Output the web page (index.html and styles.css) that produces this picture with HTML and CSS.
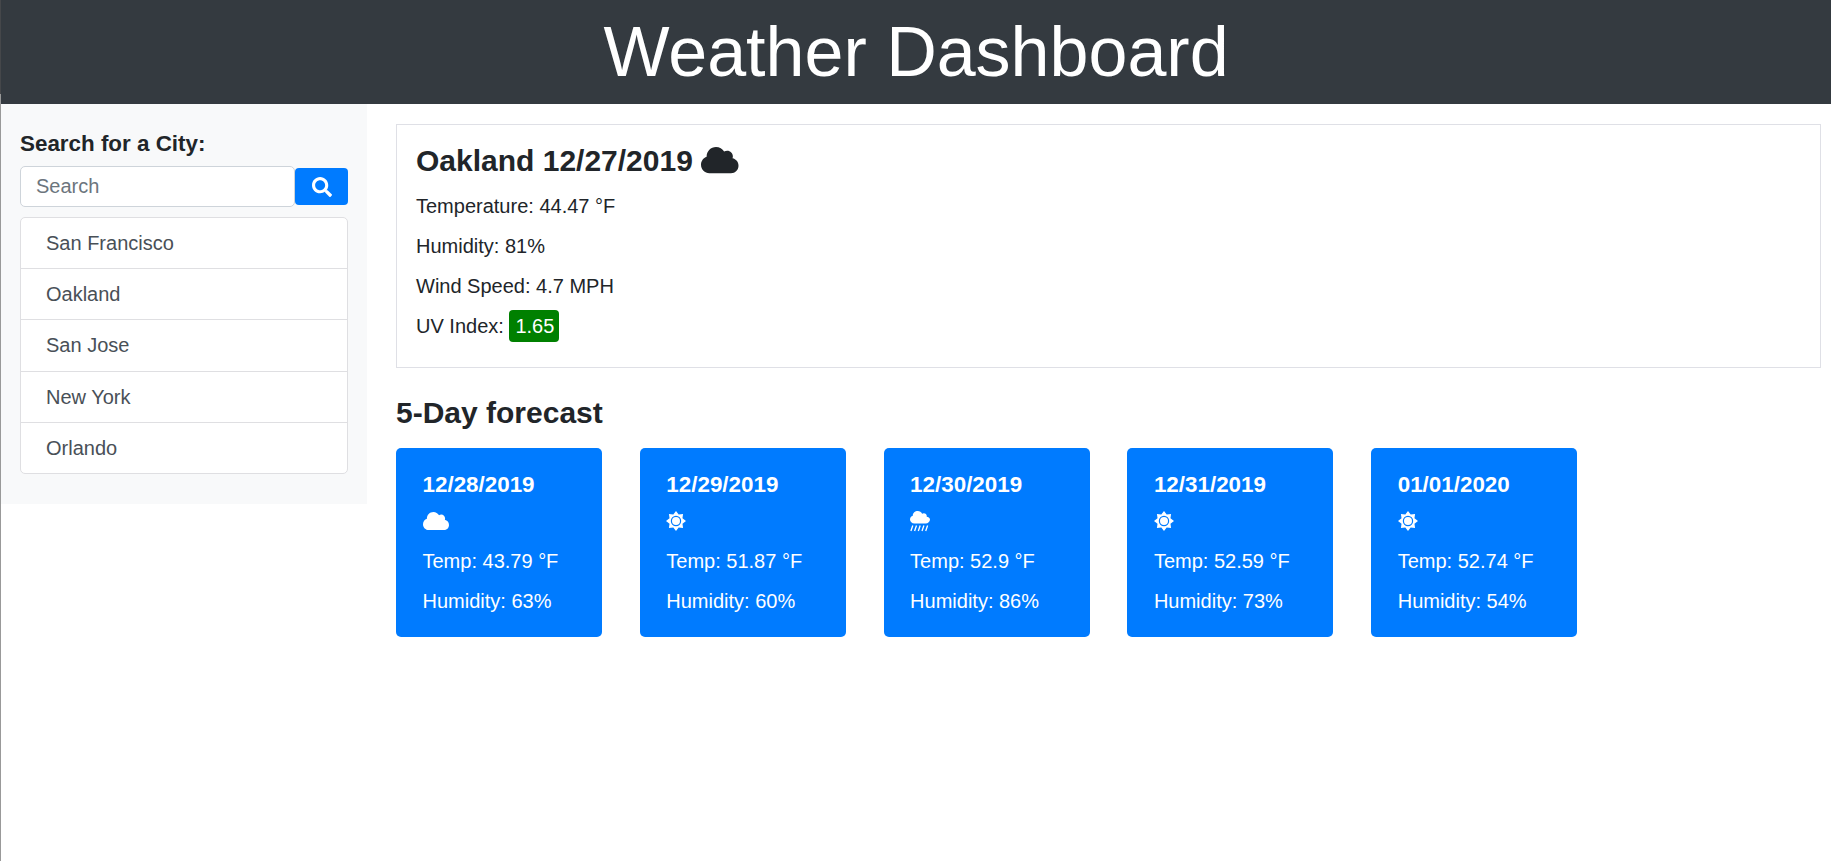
FILE: index.html
```html
<!DOCTYPE html>
<html lang="en">
<head>
    <meta charset="UTF-8">
    <meta name="viewport" content="width=device-width, initial-scale=1.0">
    <title>Weather Dashboard</title>
    <link rel="stylesheet" href="styles.css">
</head>
<body>
    <svg class="icon-defs" aria-hidden="true">
        <symbol id="icon-cloud" viewBox="0 0 640 512" preserveAspectRatio="xMinYMid">
            <path d="M537.6 226.6c4.1-10.7 6.4-22.4 6.4-34.6 0-53-43-96-96-96-19.7 0-38.1 6-53.3 16.2C367 64.2 315.3 32 256 32c-88.4 0-160 71.6-160 160 0 2.7.1 5.4.2 8.1C40.2 219.8 0 273.2 0 336c0 79.5 64.5 144 144 144h368c70.7 0 128-57.3 128-128 0-61.9-44-113.6-102.4-125.4z"/>
        </symbol>
        <symbol id="icon-sun" viewBox="0 -1 22 22" preserveAspectRatio="xMinYMid">
            <path fill-rule="evenodd" d="M10 0l2.680 3.530 4.390-.600-.600 4.390L20 10l-3.530 2.680.600 4.390-4.390-.600L10 20l-2.680-3.530-4.390.600.600-4.390L0 10l3.530-2.680-.600-4.390 4.390.600zM10 4.800a5.200 5.200 0 1 0 0 10.400 5.200 5.200 0 0 0 0-10.400zM10 6a4 4 0 1 1 0 8 4 4 0 0 1 0-8z"/>
        </symbol>
        <symbol id="icon-rain" viewBox="0 -1 22 22" preserveAspectRatio="xMinYMid">
            <path d="M16.600 5.800c.1-.3.200-.6.200-.9 0-1.500-1.300-2.700-3-2.700-.6 0-1.200.2-1.700.5C11.300.9 9.700 0 7.800 0 5 0 2.800 2 2.800 4.500v.3C1.200 5.300 0 6.700 0 8.400 0 10.600 2 12.400 4.400 12.400h11.200c2.400 0 4.400-1.800 4.400-4 0-1.300-1.400-2.400-3.400-2.600z"/>
            <path class="rain-lines" d="M2.800 14.500L.9 20M6.500 14.500L4.600 20M10.200 14.500L8.300 20M13.900 14.500L12 20M17.600 14.500L15.700 20"/>
        </symbol>
    </svg>

    <header class="top-bar">
        <h1>Weather Dashboard</h1>
    </header>

    <div class="page">
        <aside class="sidebar">
            <h2 class="search-title">Search for a City:</h2>
            <div class="search-row">
                <input class="search-input" type="text" placeholder="Search">
                <button class="search-btn" type="button" aria-label="Search">
                    <svg class="search-icon" viewBox="0 0 512 512"><path d="M505 442.7L405.3 343c-4.500-4.500-10.600-7-17-7H372c27.600-35.300 44-79.700 44-128C416 93.100 322.900 0 208 0S0 93.100 0 208s93.100 208 208 208c48.300 0 92.700-16.400 128-44v16.300c0 6.400 2.500 12.500 7 17l99.700 99.700c9.400 9.400 24.600 9.400 33.900 0l28.300-28.300c9.400-9.400 9.400-24.600.1-34zM208 336c-70.700 0-128-57.200-128-128 0-70.700 57.200-128 128-128 70.700 0 128 57.200 128 128 0 70.700-57.200 128-128 128z"/></svg>
                </button>
            </div>
            <ul class="city-list">
                <li>San Francisco</li>
                <li>Oakland</li>
                <li>San Jose</li>
                <li>New York</li>
                <li>Orlando</li>
            </ul>
        </aside>

        <main class="content">
            <section class="current">
                <h2 class="current-title">Oakland 12/27/2019 <svg class="current-icon"><use href="#icon-cloud"/></svg></h2>
                <p>Temperature: 44.47 °F</p>
                <p>Humidity: 81%</p>
                <p>Wind Speed: 4.7 MPH</p>
                <p>UV Index: <span class="uv-badge">1.65</span></p>
            </section>

            <h2 class="forecast-title">5-Day forecast</h2>
            <div class="forecast">
                <div class="day-card">
                    <h3>12/28/2019</h3>
                    <svg class="day-icon"><use href="#icon-cloud"/></svg>
                    <p>Temp: 43.79 °F</p>
                    <p>Humidity: 63%</p>
                </div>
                <div class="day-card">
                    <h3>12/29/2019</h3>
                    <svg class="day-icon"><use href="#icon-sun"/></svg>
                    <p>Temp: 51.87 °F</p>
                    <p>Humidity: 60%</p>
                </div>
                <div class="day-card">
                    <h3>12/30/2019</h3>
                    <svg class="day-icon"><use href="#icon-rain"/></svg>
                    <p>Temp: 52.9 °F</p>
                    <p>Humidity: 86%</p>
                </div>
                <div class="day-card">
                    <h3>12/31/2019</h3>
                    <svg class="day-icon"><use href="#icon-sun"/></svg>
                    <p>Temp: 52.59 °F</p>
                    <p>Humidity: 73%</p>
                </div>
                <div class="day-card">
                    <h3>01/01/2020</h3>
                    <svg class="day-icon"><use href="#icon-sun"/></svg>
                    <p>Temp: 52.74 °F</p>
                    <p>Humidity: 54%</p>
                </div>
            </div>
        </main>
    </div>
</body>
</html>
```

FILE: styles.css
```css
* {
    box-sizing: border-box;
}
html, body {
    height: 100%;
}
body {
    margin: 0;
    font-family: "Liberation Sans", Arial, sans-serif;
    font-size: 20px;
    line-height: 24px;
    color: #212529;
    background-color: #fff;
    overflow: hidden;
}
.icon-defs {
    display: none;
}
.top-bar {
    height: 104px;
    background-color: #343a40;
    color: #fff;
    text-align: center;
    border-left: 1px solid;
    border-image: linear-gradient(#45474a 93px, #999 93px) 1;
}
.top-bar h1 {
    margin: 0;
    font-size: 70px;
    font-weight: 400;
    line-height: 104px;
}
.page {
    display: flex;
    align-items: flex-start;
    height: 757px;
    border-left: 1px solid #999;
}
.sidebar {
    width: 366px;
    height: 400px;
    flex-shrink: 0;
    padding: 27px 19px 0;
    background-color: #f8f9fa;
}
.search-title {
    margin: 0 0 10px;
    font-size: 22.4px;
    font-weight: 700;
    line-height: 25px;
}
.search-row {
    display: flex;
    align-items: center;
}
.search-input {
    width: 275px;
    height: 41px;
    padding: 0 15px;
    border: 1px solid #ced4da;
    border-radius: 5px;
    font-family: inherit;
    font-size: 20px;
    color: #495057;
    background-color: #fff;
}
.search-input::placeholder {
    color: #6c757d;
}
.search-btn {
    display: flex;
    align-items: center;
    justify-content: center;
    width: 53px;
    height: 37px;
    padding: 0;
    border: none;
    border-radius: 4px;
    background-color: #007bff;
}
.search-icon {
    width: 20px;
    height: 20px;
    fill: #fff;
}
.city-list {
    margin: 10px 0 0;
    padding: 0;
    list-style: none;
    border: 1px solid #dfdfe2;
    border-radius: 5px;
    background-color: #fff;
}
.city-list li {
    height: 51.2px;
    padding-left: 25px;
    line-height: 50px;
    color: #495057;
    border-bottom: 1px solid #dfdfe2;
}
.city-list li:last-child {
    height: 50px;
    border-bottom: none;
}
.content {
    flex: 1;
    padding: 20px 10px 0 29px;
}
.content p {
    margin: 0 0 16px;
}
.current {
    height: 244px;
    padding: 19px;
    border: 1px solid #dfe0e6;
}
.current-title {
    margin: 0 0 16px;
    font-size: 30px;
    font-weight: 700;
    line-height: 34px;
}
.current-icon {
    width: 38px;
    height: 30px;
    fill: #212529;
    vertical-align: -4px;
}
.uv-badge {
    padding: 5px 5px 5px 6px;
    border-radius: 4px;
    color: #fff;
    background-color: green;
}
.forecast-title {
    margin: 28px 0 18px;
    font-size: 30px;
    font-weight: 700;
    line-height: 34px;
}
.forecast {
    display: flex;
    gap: 37.8px;
}
.day-card {
    width: 206px;
    height: 189px;
    padding: 24px 26.5px 0;
    border-radius: 5px;
    color: #fff;
    background-color: #007bff;
}
.day-card h3 {
    margin: 0 0 12px;
    font-size: 22.4px;
    font-weight: 700;
    line-height: 26px;
}
.day-icon {
    display: block;
    width: 26px;
    height: 22px;
    margin-bottom: 17px;
    fill: #fff;
}
.rain-lines {
    fill: none;
    stroke: #fff;
    stroke-width: 1.3;
}
```
